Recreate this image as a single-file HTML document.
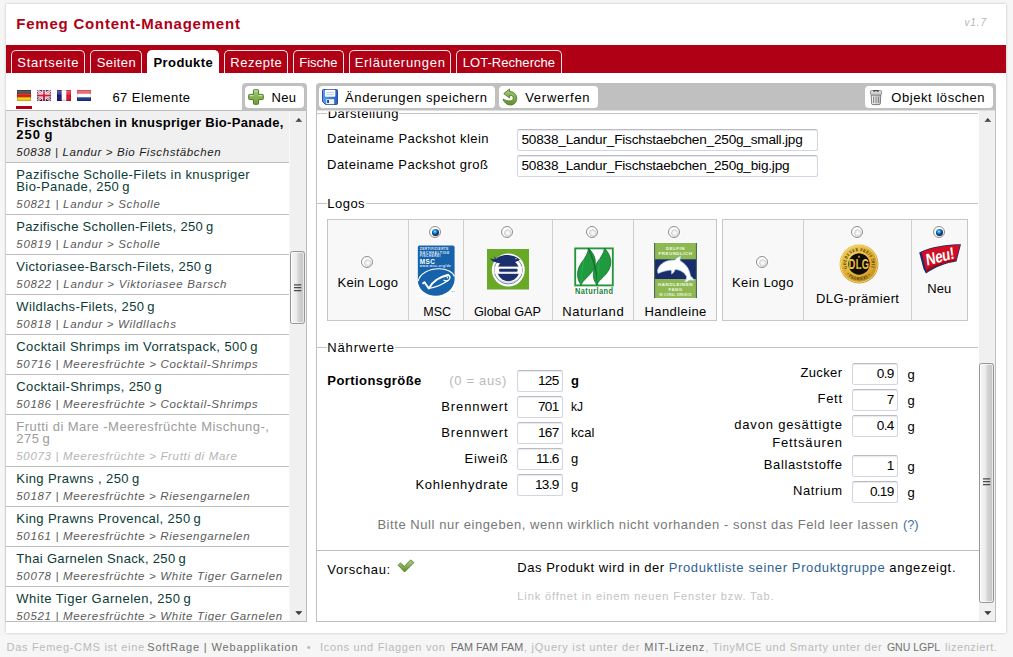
<!DOCTYPE html>
<html><head><meta charset="utf-8"><title>Femeg Content-Management</title>
<style>
*{box-sizing:border-box;margin:0;padding:0}
html,body{width:1013px;height:657px;overflow:hidden}
body{background:#f6f6f6;font-family:"Liberation Sans",sans-serif;font-size:13px;color:#000;position:relative;letter-spacing:.5px}
.a{position:absolute;white-space:nowrap}
#panel{left:6px;top:4px;width:1000px;height:629px;background:#fff;box-shadow:0 0 2.500px rgba(0,0,0,.24)}
#title{left:16px;top:15px;font-size:15px;font-weight:bold;color:#b00016;letter-spacing:.75px;line-height:18px}
#ver{left:964px;top:16px;font-size:10px;font-style:italic;color:#b4b4b4;line-height:12px;letter-spacing:.4px}
#bar{left:6px;top:45px;width:1000px;height:28px;background:#b00016}
.tab{top:50px;height:23px;border:1px solid #f8e4e6;border-bottom:0;border-radius:5px 5px 0 0;color:#fff;line-height:22px;text-align:center;font-size:13px}
.tab.on{background:#fff;color:#000;font-weight:bold;border-color:#fff;letter-spacing:.3px}
.flag{top:90px;width:16px;height:11px}
.btnwrap{background:#c0c0c0}
.btn{background:#fff;border-radius:4px;height:21.5px;top:86px}
.it{left:0;width:283px;border-bottom:1px solid #bdbdbd;background:#fff}
.it.sel{background:#f0f0f0}
.ti{left:10px;font-size:13px;line-height:12px;color:#0a3a36}
.sel .ti{font-weight:bold;color:#000;letter-spacing:.31px}
.off .ti{color:#9a9a9a}
.su{left:10px;font-size:11.5px;font-style:italic;color:#555;letter-spacing:.62px;line-height:13px}
.sel .su{color:#222}
.off .su{color:#b0b0b0}
.lab{font-size:13px;line-height:15px}
.inp{border:1px solid #d3d6e2;border-top-color:#b9bcc6;border-radius:2.500px;background:#fff;font-size:13.6px;letter-spacing:-.2px;line-height:20px;height:22px;box-shadow:inset 0 1px 1px rgba(0,0,0,.09)}
.num{text-align:right;padding-right:3.500px;letter-spacing:-.75px}
.hr{height:1px;background:#c4c4c4}
.thumb{border:1px solid #969696;border-radius:2.500px;background:linear-gradient(90deg,#f6f6f6 0,#ececec 40%,#d2d2d2 60%,#c6c6c6 100%);box-shadow:inset 0 0 0 1px rgba(255,255,255,.6)}
.cell{background:#f8f8f8;border:1px solid #c6c6c6;top:219px;height:102px}
.radio{width:12px;height:12px;border-radius:50%;border:1px solid #8b8b8b;background:radial-gradient(circle at 58% 60%,#fff 0,#eef0f2 1.800px,#cdd0d6 3.400px,#fff 3.900px,#fff 100%);box-shadow:0 0 0 1px rgba(255,255,255,.75)}
.radio.on::after{content:"";position:absolute;left:1.500px;top:1.500px;width:7px;height:7px;border-radius:50%;background:radial-gradient(circle at 42% 36%,#b8ecff 0,#2b9be8 1.300px,#167bd0 2.200px,#0d3b6c 2.900px,#0d3b6c 100%)}
#foot{left:6px;top:639px;font-size:11px;color:#b9b9b9;letter-spacing:.82px;line-height:14px}
#foot b{font-weight:normal;color:#6e6e6e}
</style></head><body>
<svg width="0" height="0" style="position:absolute"><defs><linearGradient id="ga" x1="0" y1="0" x2="0" y2="1"><stop offset="0" stop-color="#1e1e1e"/><stop offset="1" stop-color="#6a6a6a"/></linearGradient></defs></svg>

<div class="a" id="panel"></div>
<div class="a" style="left:16.3px;top:16.3px;font-size:15px;line-height:16px;letter-spacing:0.771px;font-weight:bold;color:#b00016">Femeg Content-Management</div>
<div class="a" style="left:964.5px;top:15.4px;font-size:10px;line-height:16px;letter-spacing:0.865px;font-style:italic;color:#b4b4b4">v1.7</div>
<div class="a" id="bar"></div>
<div class="a tab" style="left:11px;width:74px"></div>
<div class="a" style="left:17.3px;top:55.1px;font-size:13px;line-height:16px;letter-spacing:0.698px;color:#fff">Startseite</div>
<div class="a tab" style="left:90px;width:52px"></div>
<div class="a" style="left:96.7px;top:55.1px;font-size:13px;line-height:16px;letter-spacing:0.425px;color:#fff">Seiten</div>
<div class="a tab on" style="left:147px;width:72px"></div>
<div class="a" style="left:153.5px;top:55.1px;font-size:13px;line-height:16px;letter-spacing:0.408px;font-weight:bold;color:#000">Produkte</div>
<div class="a tab" style="left:224px;width:64px"></div>
<div class="a" style="left:230.3px;top:55.1px;font-size:13px;line-height:16px;letter-spacing:0.513px;color:#fff">Rezepte</div>
<div class="a tab" style="left:293px;width:51px"></div>
<div class="a" style="left:299.2px;top:55.1px;font-size:13px;line-height:16px;letter-spacing:0.021px;color:#fff">Fische</div>
<div class="a tab" style="left:349px;width:102px"></div>
<div class="a" style="left:354.7px;top:55.1px;font-size:13px;line-height:16px;letter-spacing:0.711px;color:#fff">Erläuterungen</div>
<div class="a tab" style="left:456px;width:106px"></div>
<div class="a" style="left:462.7px;top:55.1px;font-size:13px;line-height:16px;letter-spacing:0.053px;color:#fff">LOT-Recherche</div>
<svg class="a" style="left:17px;top:90px" width="76" height="12" viewBox="0 0 76 12"><defs><linearGradient id="gl" x1="0" y1="0" x2="0" y2="1"><stop offset="0" stop-color="#fff" stop-opacity=".1"/><stop offset=".12" stop-color="#fff" stop-opacity=".3"/><stop offset=".45" stop-color="#fff" stop-opacity=".1"/><stop offset=".5" stop-color="#fff" stop-opacity="0"/><stop offset="1" stop-color="#000" stop-opacity=".12"/></linearGradient></defs>
<g><rect width="14" height="11" fill="#1e1e1e"/><rect y="3.700" width="14" height="3.700" fill="#e01812"/><rect y="7.300" width="14" height="3.700" fill="#fbdc12"/><rect width="14" height="11" fill="url(#gl)"/><rect x=".4" y=".4" width="13.200" height="10.200" fill="none" stroke="#000" stroke-opacity=".18" stroke-width=".8"/></g>
<g transform="translate(20 0)"><rect width="14" height="11" fill="#1b2273"/><path d="M0 0L14 11M14 0L0 11" stroke="#fff" stroke-width="2.400"/><path d="M0 0L14 11M14 0L0 11" stroke="#d41a33" stroke-width=".9"/><path d="M7 0V11M0 5.500H14" stroke="#fff" stroke-width="3.800"/><path d="M7 0V11M0 5.500H14" stroke="#d41a33" stroke-width="2.200"/><rect width="14" height="11" fill="url(#gl)"/><rect x=".4" y=".4" width="13.200" height="10.200" fill="none" stroke="#000" stroke-opacity=".14" stroke-width=".8"/></g>
<g transform="translate(40 0)"><rect width="14" height="11" fill="#fff"/><rect width="4.700" height="11" fill="#1a1a78"/><rect x="9.300" width="4.700" height="11" fill="#d8162a"/><rect width="14" height="11" fill="url(#gl)"/><rect x=".4" y=".4" width="13.200" height="10.200" fill="none" stroke="#000" stroke-opacity=".16" stroke-width=".8"/></g>
<g transform="translate(60 0)"><rect width="14" height="11" fill="#fff"/><rect width="14" height="3.700" fill="#e63a45"/><rect y="7.300" width="14" height="3.700" fill="#1c3a8c"/><rect width="14" height="11" fill="url(#gl)"/><rect x=".4" y=".4" width="13.200" height="10.200" fill="none" stroke="#000" stroke-opacity=".14" stroke-width=".8"/></g></svg>
<div class="a" style="left:16px;top:106px;width:16px;height:3px;background:#b00016"></div>
<div class="a" style="left:112.4px;top:90.1px;font-size:13px;line-height:16px;letter-spacing:0.470px;">67 Elemente</div>
<div class="a btnwrap" style="left:242px;top:83px;width:65px;height:28px;border-radius:4px 4px 0 0"></div>
<div class="a btn" style="left:245px;width:59px"></div>
<svg class="a" style="left:248px;top:89px" width="16" height="16" viewBox="0 0 16 16"><defs><linearGradient id="gp" x1="0" y1="0" x2="0" y2="1"><stop offset="0" stop-color="#a9cb7c"/><stop offset="1" stop-color="#6d9a38"/></linearGradient></defs><path d="M6.2 .7h3.600Q10.600 .7 10.600 1.500V5.400H14.500Q15.300 5.400 15.300 6.200V9.800Q15.300 10.600 14.500 10.600H10.600V14.500Q10.600 15.300 9.800 15.300H6.200Q5.400 15.300 5.400 14.500V10.600H1.500Q.7 10.600 .7 9.800V6.200Q.7 5.400 1.500 5.400H5.400V1.500Q5.400 .7 6.200 .7z" fill="url(#gp)" stroke="#4f7d22" stroke-width="1"/><path d="M6.400 1.900h3.200M1.900 6.600h3.400M10.700 6.600h3.400" stroke="#d3e6b6" stroke-width="1"/></svg>
<div class="a" style="left:271.6px;top:90.1px;font-size:13px;line-height:16px;letter-spacing:0.320px;">Neu</div>
<div class="a" style="left:6px;top:110px;width:301px;height:1px;background:#bdbdbd"></div>
<div class="a" style="left:6px;top:110px;width:301px;height:512px;overflow:hidden;border-bottom:1px solid #bdbdbd">
<div class="a it sel" style="top:1px;height:52px"></div>
<div class="a it " style="top:53px;height:52px"></div>
<div class="a it " style="top:105px;height:40px"></div>
<div class="a it " style="top:145px;height:40px"></div>
<div class="a it " style="top:185px;height:40px"></div>
<div class="a it " style="top:225px;height:40px"></div>
<div class="a it " style="top:265px;height:40px"></div>
<div class="a it off" style="top:305px;height:52px"></div>
<div class="a it " style="top:357px;height:40px"></div>
<div class="a it " style="top:397px;height:40px"></div>
<div class="a it " style="top:437px;height:40px"></div>
<div class="a it " style="top:477px;height:40px"></div>
</div>
<div class="a" style="left:6px;top:111px;width:283px;height:510px;overflow:hidden"><div class="a" style="left:-6px;top:-111px">
<div class="a" style="left:16.3px;top:115.0px;font-size:13px;line-height:16px;letter-spacing:0.299px;color:#000;font-weight:bold">Fischstäbchen in knuspriger Bio-Panade,</div>
<div class="a" style="left:16.3px;top:127.0px;font-size:13px;line-height:16px;letter-spacing:0.966px;color:#000;font-weight:bold">250 g</div>
<div class="a" style="left:16.3px;top:144.1px;font-size:11.5px;line-height:16px;letter-spacing:0.608px;font-style:italic;color:#1c1c1c">50838 | Landur &gt; Bio Fischstäbchen</div>
<div class="a" style="left:16.3px;top:167.0px;font-size:13px;line-height:16px;letter-spacing:0.378px;color:#0b3b36;">Pazifische Scholle-Filets in knuspriger</div>
<div class="a" style="left:16.3px;top:179.0px;font-size:13px;line-height:16px;letter-spacing:0.401px;color:#0b3b36;">Bio-Panade, 250 g</div>
<div class="a" style="left:16.3px;top:196.1px;font-size:11.5px;line-height:16px;letter-spacing:0.683px;font-style:italic;color:#5a5a5a">50821 | Landur &gt; Scholle</div>
<div class="a" style="left:16.3px;top:219.0px;font-size:13px;line-height:16px;letter-spacing:0.313px;color:#0b3b36;">Pazifische Schollen-Filets, 250 g</div>
<div class="a" style="left:16.3px;top:236.1px;font-size:11.5px;line-height:16px;letter-spacing:0.683px;font-style:italic;color:#5a5a5a">50819 | Landur &gt; Scholle</div>
<div class="a" style="left:16.3px;top:259.0px;font-size:13px;line-height:16px;letter-spacing:0.400px;color:#0b3b36;">Victoriasee-Barsch-Filets, 250 g</div>
<div class="a" style="left:16.3px;top:276.1px;font-size:11.5px;line-height:16px;letter-spacing:0.714px;font-style:italic;color:#5a5a5a">50822 | Landur &gt; Viktoriasee Barsch</div>
<div class="a" style="left:16.3px;top:299.0px;font-size:13px;line-height:16px;letter-spacing:0.388px;color:#0b3b36;">Wildlachs-Filets, 250 g</div>
<div class="a" style="left:16.3px;top:316.1px;font-size:11.5px;line-height:16px;letter-spacing:0.679px;font-style:italic;color:#5a5a5a">50818 | Landur &gt; Wildllachs</div>
<div class="a" style="left:16.3px;top:339.0px;font-size:13px;line-height:16px;letter-spacing:0.417px;color:#0b3b36;">Cocktail Shrimps im Vorratspack, 500 g</div>
<div class="a" style="left:16.3px;top:356.1px;font-size:11.5px;line-height:16px;letter-spacing:0.678px;font-style:italic;color:#5a5a5a">50716 | Meeresfrüchte &gt; Cocktail-Shrimps</div>
<div class="a" style="left:16.3px;top:379.0px;font-size:13px;line-height:16px;letter-spacing:0.382px;color:#0b3b36;">Cocktail-Shrimps, 250 g</div>
<div class="a" style="left:16.3px;top:396.1px;font-size:11.5px;line-height:16px;letter-spacing:0.678px;font-style:italic;color:#5a5a5a">50186 | Meeresfrüchte &gt; Cocktail-Shrimps</div>
<div class="a" style="left:16.3px;top:419.0px;font-size:13px;line-height:16px;letter-spacing:0.456px;color:#9c9c9c;">Frutti di Mare -Meeresfrüchte Mischung-,</div>
<div class="a" style="left:16.3px;top:431.0px;font-size:13px;line-height:16px;letter-spacing:0.467px;color:#9c9c9c;">275 g</div>
<div class="a" style="left:16.3px;top:448.1px;font-size:11.5px;line-height:16px;letter-spacing:0.673px;font-style:italic;color:#b4b4b4">50073 | Meeresfrüchte &gt; Frutti di Mare</div>
<div class="a" style="left:16.3px;top:471.0px;font-size:13px;line-height:16px;letter-spacing:0.420px;color:#0b3b36;">King Prawns , 250 g</div>
<div class="a" style="left:16.3px;top:488.1px;font-size:11.5px;line-height:16px;letter-spacing:0.669px;font-style:italic;color:#5a5a5a">50187 | Meeresfrüchte &gt; Riesengarnelen</div>
<div class="a" style="left:16.3px;top:511.0px;font-size:13px;line-height:16px;letter-spacing:0.420px;color:#0b3b36;">King Prawns Provencal, 250 g</div>
<div class="a" style="left:16.3px;top:528.1px;font-size:11.5px;line-height:16px;letter-spacing:0.669px;font-style:italic;color:#5a5a5a">50161 | Meeresfrüchte &gt; Riesengarnelen</div>
<div class="a" style="left:16.3px;top:551.0px;font-size:13px;line-height:16px;letter-spacing:0.341px;color:#0b3b36;">Thai Garnelen Snack, 250 g</div>
<div class="a" style="left:16.3px;top:568.1px;font-size:11.5px;line-height:16px;letter-spacing:0.668px;font-style:italic;color:#5a5a5a">50078 | Meeresfrüchte &gt; White Tiger Garnelen</div>
<div class="a" style="left:16.3px;top:591.0px;font-size:13px;line-height:16px;letter-spacing:0.493px;color:#0b3b36;">White Tiger Garnelen, 250 g</div>
<div class="a" style="left:16.3px;top:608.1px;font-size:11.5px;line-height:16px;letter-spacing:0.668px;font-style:italic;color:#5a5a5a">50521 | Meeresfrüchte &gt; White Tiger Garnelen</div>
</div></div>
<div class="a" style="left:5px;top:110px;width:1px;height:512px;background:#d2d2d2"></div>
<div class="a" style="left:289px;top:111px;width:17px;height:510px;background:linear-gradient(90deg,#f8f8f8 0,#f8f8f8 1px,#f0f0f0 1px)"></div>
<div class="a" style="left:306px;top:110px;width:1px;height:512px;background:#bdbdbd"></div>
<div class="a thumb" style="left:290px;top:251px;width:15px;height:73px"></div>
<svg class="a" style="left:293px;top:283px" width="10" height="10" viewBox="0 0 10 10"><path d="M1 1.800h7.300M1 4.700h7.300M1 7.600h7.300" stroke="#4a4a4a" stroke-width="1.300"/></svg>
<svg class="a" style="left:294.500px;top:118px" width="8" height="5" viewBox="0 0 8 5"><path d="M.3 4L3.800 0L7.300 4z" fill="url(#ga)"/></svg>
<svg class="a" style="left:294.500px;top:611px" width="8" height="5" viewBox="0 0 8 5"><path d="M.3 .2L3.800 4.200L7.300 .2z" fill="url(#ga)"/></svg>
<div class="a" style="left:316px;top:110px;width:680px;height:512px;border:1px solid #bfbfbf;background:#fff"></div>
<div class="a btnwrap" style="left:316px;top:83px;width:680px;height:27.500px;border-radius:4px 4px 0 0"></div>
<div class="a" style="left:317px;top:110px;width:678px;height:1px;background:#dfdfdf"></div>
<div class="a btn" style="left:319px;width:176px"></div>
<svg class="a" style="left:322px;top:89px" width="16" height="16" viewBox="0 0 16 16"><defs><linearGradient id="gs" x1="0" y1="0" x2="1" y2="0"><stop offset="0" stop-color="#5b9be8"/><stop offset=".5" stop-color="#3f7fd9"/><stop offset="1" stop-color="#2c5fc0"/></linearGradient></defs><path d="M1.500 .5H14.500Q15.500 .5 15.500 1.500V14.500Q15.500 15.500 14.500 15.500H3.500L.5 12.500V1.500Q.5 .5 1.500 .5z" fill="url(#gs)" stroke="#2450a8" stroke-width="1"/><rect x="3" y=".8" width="10.300" height="7" rx=".8" fill="#fff"/><path d="M4.400 3.600h7.400M4.400 5.700h7.400" stroke="#a9c8ef" stroke-width=".9"/><rect x="4.200" y="10.200" width="8" height="5" fill="#f1f0ea"/><rect x="5.100" y="11" width="1.900" height="3" fill="#1f47a3"/></svg>
<div class="a" style="left:345.1px;top:90.1px;font-size:13px;line-height:16px;letter-spacing:0.583px;">Änderungen speichern</div>
<div class="a btn" style="left:499px;width:99px"></div>
<svg class="a" style="left:502px;top:88px" width="16" height="18" viewBox="0 0 16 18"><defs><linearGradient id="gu" x1="0" y1="0" x2="0" y2="1"><stop offset="0" stop-color="#a8cb80"/><stop offset="1" stop-color="#5f8f2d"/></linearGradient></defs><path d="M7.600 1L1.800 5.600 7.600 10V7.300C10 7 11.300 8.300 11.300 10 11.300 12 9.700 13 8 13 5.500 13 3.500 12.300 1 11.200 2.300 14.800 5 17 8.500 17 12 17 14.700 14 14.700 10.200 14.700 6.400 11.800 3.500 7.600 3.500z" fill="url(#gu)" stroke="#4d7a22" stroke-width=".9" stroke-linejoin="round"/></svg>
<div class="a" style="left:525.2px;top:90.1px;font-size:13px;line-height:16px;letter-spacing:0.732px;">Verwerfen</div>
<div class="a btn" style="left:865px;width:128px"></div>
<svg class="a" style="left:869px;top:89px" width="14" height="17" viewBox="0 0 14 17"><defs><linearGradient id="gt" x1="0" y1="0" x2="1" y2="0"><stop offset="0" stop-color="#f4f4f4"/><stop offset=".5" stop-color="#d9d9d9"/><stop offset="1" stop-color="#bdbdbd"/></linearGradient></defs><path d="M2.200 6H11.800L11.300 14.800Q11.200 15.600 10.300 15.600H3.700Q2.800 15.600 2.700 14.800z" fill="url(#gt)" stroke="#6f6f6f" stroke-width=".9"/><path d="M4.600 7.500V14M7 7.500V14M9.400 7.500V14" stroke="#7b7b7b" stroke-width=".9"/><rect x="1.500" y="1.500" width="11" height="4.400" rx="1.300" fill="#e6e6e6" stroke="#808080" stroke-width=".9"/><path d="M5 2.900V2.200Q5 1.700 5.500 1.700H8.500Q9 1.700 9 2.200V2.900" fill="none" stroke="#2e2e2e" stroke-width="1.100"/><path d="M2 4.200H12" stroke="#a9a9a9" stroke-width=".7"/></svg>
<div class="a" style="left:891.3px;top:90.1px;font-size:13px;line-height:16px;letter-spacing:0.562px;">Objekt löschen</div>
<div class="a hr" style="left:317px;top:113px;width:661px"></div>
<div class="a" style="left:327px;top:111px;width:72px;height:8px;background:#fff"></div>
<div class="a" style="left:327.7px;top:106.4px;font-size:13px;line-height:16px;letter-spacing:0.493px;clip-path:inset(5.200px 0 0 0)">Darstellung</div>
<div class="a" style="left:327.0px;top:131.4px;font-size:13px;line-height:16px;letter-spacing:0.491px;">Dateiname Packshot klein</div>
<div class="a" style="left:327.0px;top:157.4px;font-size:13px;line-height:16px;letter-spacing:0.487px;">Dateiname Packshot groß</div>
<div class="a inp" style="left:517px;top:129px;width:301px;padding-left:3.500px">50838_Landur_Fischstaebchen_250g_small.jpg</div>
<div class="a inp" style="left:517px;top:155px;width:301px;padding-left:3.500px">50838_Landur_Fischstaebchen_250g_big.jpg</div>
<div class="a hr" style="left:317px;top:203px;width:661px"></div>
<div class="a" style="left:327px;top:197px;width:38.500px;height:12px;background:#fff"></div>
<div class="a" style="left:327.3px;top:196.4px;font-size:13px;line-height:16px;letter-spacing:0.470px;">Logos</div>
<div class="a cell" style="left:327px;width:390px"></div>
<div class="a cell" style="left:722px;width:246px"></div>
<div class="a" style="left:408px;top:220px;width:1px;height:100px;background:#cfcfcf"></div>
<div class="a" style="left:463px;top:220px;width:1px;height:100px;background:#cfcfcf"></div>
<div class="a" style="left:552px;top:220px;width:1px;height:100px;background:#cfcfcf"></div>
<div class="a" style="left:633px;top:220px;width:1px;height:100px;background:#cfcfcf"></div>
<div class="a" style="left:803px;top:220px;width:1px;height:100px;background:#cfcfcf"></div>
<div class="a" style="left:911px;top:220px;width:1px;height:100px;background:#cfcfcf"></div>
<div class="a radio" style="left:361px;top:256px"></div>
<div class="a" style="left:337.6px;top:275.4px;font-size:13px;line-height:16px;letter-spacing:0.230px;">Kein Logo</div>
<div class="a radio on" style="left:429px;top:226px"></div>
<div class="a" style="left:423.3px;top:304.4px;font-size:12.51px;line-height:16px;letter-spacing:0.000px;">MSC</div>
<div class="a radio" style="left:501px;top:226px"></div>
<div class="a" style="left:474.0px;top:304.4px;font-size:12.7px;line-height:16px;letter-spacing:0.000px;">Global GAP</div>
<div class="a radio" style="left:586px;top:226px"></div>
<div class="a" style="left:562.2px;top:304.4px;font-size:13px;line-height:16px;letter-spacing:0.641px;">Naturland</div>
<div class="a radio" style="left:668px;top:226px"></div>
<div class="a" style="left:644.5px;top:304.4px;font-size:13px;line-height:16px;letter-spacing:0.407px;">Handleine</div>
<div class="a radio" style="left:756px;top:256px"></div>
<div class="a" style="left:732.1px;top:275.4px;font-size:13px;line-height:16px;letter-spacing:0.342px;">Kein Logo</div>
<div class="a radio" style="left:851px;top:226px"></div>
<div class="a" style="left:816.0px;top:291.4px;font-size:13px;line-height:16px;letter-spacing:0.386px;">DLG-prämiert</div>
<div class="a radio on" style="left:933px;top:226px"></div>
<div class="a" style="left:927.2px;top:281.4px;font-size:13px;line-height:16px;letter-spacing:0.120px;">Neu</div>
<svg class="a" style="left:416.7px;top:244.8px" width="38.5" height="52.5" viewBox="0 0 38.5 52.5"><rect width="38.5" height="52.5" fill="#fff"/><path d="M.8 2Q.8 .4 2.400 .4H36Q37.600 .4 37.600 2V34C37.600 44 28 50.800 19 50.800C9 50.800 .8 44.500 .8 35z" fill="#1763ab"/><path d="M1.200 36C3 28.500 12 23.800 22 23.800 30 23.800 36 27 37.400 31.500" fill="none" stroke="#fff" stroke-width="1.100"/><path d="M5.500 38.800l2-1.500 4.300 6.200C15 37 22.500 31.500 32 30" fill="none" stroke="#fff" stroke-width="2" stroke-linejoin="round"/><path d="M11.800 43.500C17 42.500 26 39.500 31.500 35" fill="none" stroke="#fff" stroke-width="1.100"/><path d="M26.500 31.200c3.400-2.600 7.200-1.200 6.400 2-.7 2.800-4.200 3.600-6.400 1.800" fill="none" stroke="#fff" stroke-width="1.300"/><circle cx="30.400" cy="32.600" r=".8" fill="#fff"/><g font-family="Liberation Sans, sans-serif" font-weight="bold" fill="#e3edf7"><text x="2.800" y="5" font-size="3.500" textLength="29" lengthAdjust="spacingAndGlyphs">ZERTIFIZIERTE</text><text x="2.800" y="8.700" font-size="3.500" textLength="30" lengthAdjust="spacingAndGlyphs">NACHHALTIGE</text><text x="2.800" y="12.400" font-size="3.500" textLength="21" lengthAdjust="spacingAndGlyphs">FISCHEREI</text><text x="2.800" y="18.600" font-size="7" fill="#fff" textLength="15.500" lengthAdjust="spacingAndGlyphs">MSC</text><text x="2.800" y="22.200" font-size="3.400" textLength="31.500" lengthAdjust="spacingAndGlyphs">www.msc.org/de</text></g><text x="34.500" y="46.500" font-family="Liberation Sans, sans-serif" font-size="2.500" fill="#1763ab">TM</text></svg>
<svg class="a" style="left:487px;top:249px" width="42" height="40.500" viewBox="0 0 42 40.500"><rect width="42" height="40.500" fill="#6aa827"/><circle cx="21.300" cy="21" r="16.500" fill="#fff"/><circle cx="21.300" cy="21" r="14" fill="none" stroke="#3b4f8c" stroke-width=".7"/><circle cx="21.300" cy="21.400" r="10.800" fill="#1c2f6d"/><rect x="7.500" y="17.600" width="27.600" height="7.200" fill="#fff"/><rect x="12" y="19.700" width="18.600" height="3" rx="1.200" fill="#1c2f6d"/><path d="M12.500 23.900h17.600" stroke="#c5cbdc" stroke-width=".5"/><path d="M7 12.500C11.500 4.500 25 4 33 10.800 26 15.500 14 16 7 12.500z" fill="#1c2f6d"/><path d="M2.800 9.200l4.600 1.400.4-3.800 1.800 5.400-3 .9z" fill="#1c2f6d"/><circle cx="28.900" cy="9.700" r=".6" fill="#fff"/><path d="M11 30.500c6 3.600 15 3.600 20.600 0" stroke="#aab3cc" stroke-width=".7" fill="none"/></svg>
<svg class="a" style="left:573.500px;top:246.500px" width="40" height="48" viewBox="0 0 40 48"><rect width="40" height="48" fill="#fff"/><rect x="1.200" y="1.400" width="37.600" height="37" fill="#fff" stroke="#26973f" stroke-width="1.900"/><path d="M14.500 1.200C22.500 9 23 17 18.500 24 14.500 30 9 33 7 38 2 31 2.500 22 8 15 11.500 10.500 14 6 14.500 1.200z" fill="#1f9a3e" stroke="#146b2a" stroke-width=".8"/><path d="M30.500 1.200C38 9 38.500 18 33.500 25 29.500 31 24.500 33 23 38 17.500 31 18.500 22 23.500 15 27 10 30 6 30.500 1.200z" fill="#1f9a3e" stroke="#146b2a" stroke-width=".8"/><path d="M14.500 1.500C19 12 24.500 26 23 38" fill="none" stroke="#146b2a" stroke-width="1.200"/><path d="M10 12C8 20 8 28 7 37M26 12C24 20 24 28 23 37" fill="none" stroke="#3db35a" stroke-width=".6"/><text x="1" y="47" font-family="Liberation Sans, sans-serif" font-weight="bold" font-size="8.600" fill="#178038" textLength="38.500" lengthAdjust="spacingAndGlyphs">Naturland</text></svg>
<svg class="a" style="left:654px;top:242.700px" width="43" height="55" viewBox="0 0 43 55"><rect width="43" height="55" fill="#8db852"/><rect y="16.300" width="43" height="19.700" fill="#1c2c6b"/><path d="M0 0H1.100V55H0zM41.900 0H43V55H41.900z" fill="#4b6a58"/><path d="M3.500 27.500C5 20.500 13 16.500 21 17 22.500 14.800 25 13.500 27 13.500 26 15 25.800 16.600 26.300 18 31.500 20.500 35.500 26 36.500 33 38 34 39.500 35.800 40 37.500 38 36.800 36 36.800 34.500 37.500 33.500 38.600 32 39.200 30.500 39 32 37.500 32.800 35.500 32.500 33.500 30.500 29.500 26 26.500 21 26.500 20.500 28.500 19.500 30 17.500 31 17.800 29.500 17.500 28 17 27 12.500 27.500 8 28.500 4 30.500z" fill="#fff" stroke="#9bd0ee" stroke-width=".7"/><g font-family="Liberation Sans, sans-serif" font-weight="bold" fill="#f3f8e8" text-anchor="middle"><text x="21.500" y="6.600" font-size="4.300" textLength="19" lengthAdjust="spacingAndGlyphs">DELFIN</text><text x="21.500" y="12" font-size="4.300" textLength="34" lengthAdjust="spacingAndGlyphs">FREUNDLICH</text><text x="21.500" y="42.800" font-size="4.300" textLength="35" lengthAdjust="spacingAndGlyphs">HANDLEINEN</text><text x="21.500" y="47.600" font-size="4.300" textLength="14" lengthAdjust="spacingAndGlyphs">FANG</text><text x="21.500" y="52.600" font-size="2.900" textLength="33" lengthAdjust="spacingAndGlyphs">IM CORAL DREIECK</text></g></svg>
<svg class="a" style="left:838.500px;top:243.800px" width="40" height="40" viewBox="0 0 40 40"><defs><radialGradient id="gd" cx=".4" cy=".35" r=".75"><stop offset="0" stop-color="#f7dc6b"/><stop offset=".55" stop-color="#e3b233"/><stop offset="1" stop-color="#b58217"/></radialGradient><path id="rt" d="M7.970 24.380A12.800 12.800 0 1 1 32.030 24.380"/><path id="rb" d="M7.590 30.410A16.200 16.200 0 0 0 32.410 30.410"/></defs><circle cx="20" cy="20" r="19.400" fill="url(#gd)"/><circle cx="20" cy="20" r="18.300" fill="none" stroke="#f6e39a" stroke-width=".8"/><g font-family="Liberation Serif, serif" font-weight="bold" font-size="4.600" fill="#33240a"><text><textPath href="#rt" textLength="48" lengthAdjust="spacingAndGlyphs">GOLDENER PREIS 2011</textPath></text><text><textPath href="#rb" textLength="27" lengthAdjust="spacingAndGlyphs">• PRÄMIERT •</textPath></text></g><circle cx="20" cy="20" r="10.700" fill="#120d04"/><text x="20" y="25" text-anchor="middle" font-family="Liberation Sans, sans-serif" font-weight="bold" font-size="13" fill="#edc34a" transform="translate(20 20) scale(.72 1.100) translate(-20 -20)">DLG</text><rect x="19.400" y="9.500" width="1.200" height="21" fill="#120d04" opacity=".5"/><path d="M20 11.200l1.200 2.300h-2.400z" fill="#edc34a"/></svg>
<svg class="a" style="left:918px;top:243px" width="44" height="32" viewBox="0 0 44 32"><path d="M1.200 9.400C12 3.500 30 1.200 43 1.200L38.500 18.600C28 20 17 24.500 8 30.400L5.500 26z" fill="#1d2a6c"/><path d="M3.600 9.200C14 4 30 2 42 2L37.800 17.800C27 19.400 16 23.500 8.400 28.800z" fill="#d20f22"/><path d="M8.400 28.800C16 23.500 27 19.400 37.800 17.800L38.300 16C27 17.500 16 21.500 7.900 26.800z" fill="#9e0a18"/><text transform="translate(8.800 22.800) rotate(-15) skewX(-8) scale(1 1.220)" font-family="Liberation Sans, sans-serif" font-weight="bold" font-size="13.500" fill="#fff" letter-spacing="-.3">Neu!</text></svg>

<div class="a hr" style="left:317px;top:347px;width:661px"></div>
<div class="a" style="left:327px;top:341px;width:68px;height:12px;background:#fff"></div>
<div class="a" style="left:327.3px;top:340.4px;font-size:13px;line-height:16px;letter-spacing:0.841px;">Nährwerte</div>
<div class="a" style="left:327.3px;top:373.4px;font-size:13px;line-height:16px;letter-spacing:0.430px;font-weight:bold">Portionsgröße</div>
<div class="a" style="left:449.3px;top:373.4px;font-size:13px;line-height:16px;letter-spacing:0.666px;color:#b9b9b9">(0 = aus)</div>
<div class="a inp num" style="left:517px;top:370px;width:46px">125</div>
<div class="a" style="left:571.0px;top:373.4px;font-size:13px;line-height:16px;letter-spacing:0.000px;font-weight:bold">g</div>
<div class="a inp num" style="left:517px;top:396px;width:46px">701</div>
<div class="a" style="left:571.0px;top:399.4px;font-size:12.05px;line-height:16px;letter-spacing:0.000px;">kJ</div>
<div class="a" style="left:441.3px;top:399.4px;font-size:13px;line-height:16px;letter-spacing:0.894px;">Brennwert</div>
<div class="a inp num" style="left:517px;top:422px;width:46px">167</div>
<div class="a" style="left:571.0px;top:425.4px;font-size:13px;line-height:16px;letter-spacing:0.092px;">kcal</div>
<div class="a" style="left:441.3px;top:425.4px;font-size:13px;line-height:16px;letter-spacing:0.894px;">Brennwert</div>
<div class="a inp num" style="left:517px;top:448px;width:46px">11.6</div>
<div class="a" style="left:571.0px;top:451.4px;font-size:13px;line-height:16px;letter-spacing:0.000px;">g</div>
<div class="a" style="left:464.5px;top:451.4px;font-size:13px;line-height:16px;letter-spacing:0.837px;">Eiweiß</div>
<div class="a inp num" style="left:517px;top:474px;width:46px">13.9</div>
<div class="a" style="left:571.0px;top:477.4px;font-size:13px;line-height:16px;letter-spacing:0.000px;">g</div>
<div class="a" style="left:415.4px;top:477.4px;font-size:13px;line-height:16px;letter-spacing:0.705px;">Kohlenhydrate</div>
<div class="a inp num" style="left:852px;top:363px;width:46px">0.9</div>
<div class="a" style="left:907.4px;top:367.2px;font-size:13px;line-height:16px;letter-spacing:0.000px;">g</div>
<div class="a" style="left:800.4px;top:365.4px;font-size:13px;line-height:16px;letter-spacing:0.373px;">Zucker</div>
<div class="a inp num" style="left:852px;top:389px;width:46px">7</div>
<div class="a" style="left:907.4px;top:393.2px;font-size:13px;line-height:16px;letter-spacing:0.000px;">g</div>
<div class="a" style="left:817.5px;top:391.4px;font-size:13px;line-height:16px;letter-spacing:0.698px;">Fett</div>
<div class="a inp num" style="left:852px;top:415px;width:46px">0.4</div>
<div class="a" style="left:907.4px;top:419.2px;font-size:13px;line-height:16px;letter-spacing:0.000px;">g</div>
<div class="a" style="left:734.2px;top:417.4px;font-size:13px;line-height:16px;letter-spacing:0.826px;">davon gesättigte</div>
<div class="a inp num" style="left:852px;top:455px;width:46px">1</div>
<div class="a" style="left:907.4px;top:459.2px;font-size:13px;line-height:16px;letter-spacing:0.000px;">g</div>
<div class="a" style="left:763.8px;top:457.4px;font-size:13px;line-height:16px;letter-spacing:0.634px;">Ballaststoffe</div>
<div class="a inp num" style="left:852px;top:481px;width:46px">0.19</div>
<div class="a" style="left:907.4px;top:485.2px;font-size:13px;line-height:16px;letter-spacing:0.000px;">g</div>
<div class="a" style="left:793.1px;top:483.4px;font-size:13px;line-height:16px;letter-spacing:0.564px;">Natrium</div>
<div class="a" style="left:772.2px;top:435.4px;font-size:13px;line-height:16px;letter-spacing:0.849px;">Fettsäuren</div>
<div class="a" style="left:377.4px;top:517.0px;font-size:13px;line-height:16px;letter-spacing:0.559px;color:#777">Bitte Null nur eingeben, wenn wirklich nicht vorhanden - sonst das Feld leer lassen</div>
<div class="a" style="left:902.9px;top:517.0px;font-size:12.81px;line-height:16px;letter-spacing:0.000px;color:#3b6ea5">(?)</div>
<div class="a hr" style="left:317px;top:550px;width:662px;background:#bcbcbc"></div>
<div class="a" style="left:327.3px;top:561.6px;font-size:13px;line-height:16px;letter-spacing:0.634px;">Vorschau:</div>
<svg class="a" style="left:397px;top:559px" width="18" height="14" viewBox="0 0 18 14"><defs><linearGradient id="gc" x1="0" y1="0" x2="0" y2="1"><stop offset="0" stop-color="#b3d08c"/><stop offset="1" stop-color="#5d8a2c"/></linearGradient></defs><path d="M1.200 6.300L3.400 3.900L7.400 7.400L13.600 .9L16.900 3.500L7.600 13z" fill="url(#gc)" stroke="#4f7d23" stroke-width=".9" stroke-linejoin="round"/></svg>
<div class="a" style="left:517.3px;top:559.7px;font-size:13px;line-height:16px;letter-spacing:0.535px;">Das Produkt wird in der</div>
<div class="a" style="left:668.7px;top:559.7px;font-size:13px;line-height:16px;letter-spacing:0.630px;color:#2e5f96">Produktliste seiner Produktgruppe</div>
<div class="a" style="left:889.3px;top:559.7px;font-size:13px;line-height:16px;letter-spacing:0.689px;">angezeigt.</div>
<div class="a" style="left:517.3px;top:587.7px;font-size:11px;line-height:16px;letter-spacing:0.893px;color:#c3c3c3">Link öffnet in einem neuen Fenster bzw. Tab.</div>
<div class="a" style="left:979px;top:111px;width:16px;height:510px;background:#f0f0f0"></div>
<div class="a thumb" style="left:979px;top:363px;width:15px;height:240px"></div>
<svg class="a" style="left:982px;top:477px" width="10" height="10" viewBox="0 0 10 10"><path d="M1 1.800h7.300M1 4.700h7.300M1 7.600h7.300" stroke="#4a4a4a" stroke-width="1.300"/></svg>
<svg class="a" style="left:983.500px;top:118px" width="8" height="5" viewBox="0 0 8 5"><path d="M.3 4L3.800 0L7.300 4z" fill="url(#ga)"/></svg>
<svg class="a" style="left:983.500px;top:611px" width="8" height="5" viewBox="0 0 8 5"><path d="M.3 .2L3.800 4.200L7.300 .2z" fill="url(#ga)"/></svg>
<div class="a" style="left:6.5px;top:638.6px;font-size:11px;line-height:16px;letter-spacing:0.706px;color:#b9b9b9">Das Femeg-CMS ist eine</div>
<div class="a" style="left:147.2px;top:638.6px;font-size:11px;line-height:16px;letter-spacing:0.856px;color:#707070">SoftRage | Webapplikation</div>
<div class="a" style="left:306.8px;top:638.6px;font-size:11px;line-height:16px;letter-spacing:0.000px;color:#b9b9b9">•</div>
<div class="a" style="left:320.1px;top:638.6px;font-size:11px;line-height:16px;letter-spacing:0.679px;color:#b9b9b9">Icons und Flaggen von</div>
<div class="a" style="left:450.7px;top:638.6px;font-size:10.8px;line-height:16px;letter-spacing:0.000px;color:#707070">FAM FAM FAM</div>
<div class="a" style="left:524.0px;top:638.6px;font-size:11px;line-height:16px;letter-spacing:0.745px;color:#b9b9b9">, jQuery ist unter der</div>
<div class="a" style="left:644.3px;top:638.6px;font-size:11px;line-height:16px;letter-spacing:0.689px;color:#707070">MIT-Lizenz</div>
<div class="a" style="left:705.3px;top:638.6px;font-size:11px;line-height:16px;letter-spacing:0.665px;color:#b9b9b9">, TinyMCE und Smarty unter der</div>
<div class="a" style="left:886.9px;top:638.6px;font-size:10.51px;line-height:16px;letter-spacing:0.000px;color:#707070">GNU LGPL</div>
<div class="a" style="left:945.1px;top:638.6px;font-size:11px;line-height:16px;letter-spacing:0.523px;color:#b9b9b9">lizenziert.</div>
</body></html>
